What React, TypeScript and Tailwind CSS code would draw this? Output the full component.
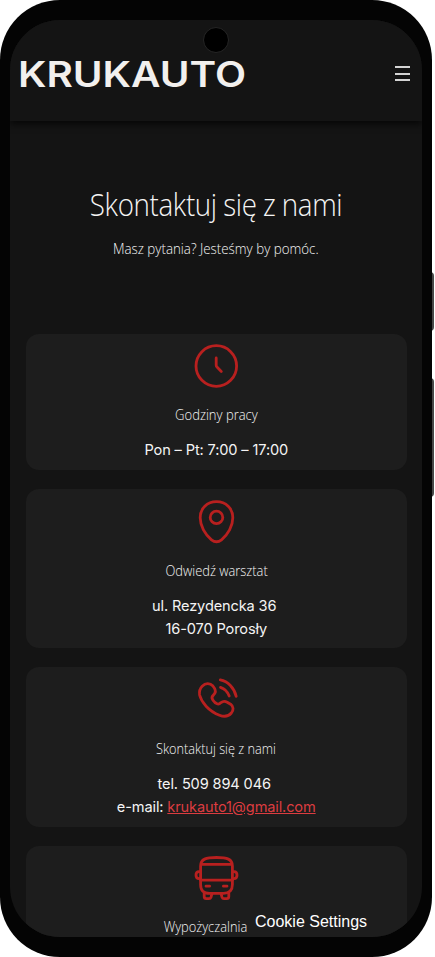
import React from 'react';
import clsx from 'clsx';

const Icon = ({ children }: { children: React.ReactNode }) => (
  <svg
    viewBox="0 0 45 45"
    className="block h-[45px] w-[45px] shrink-0 overflow-visible fill-none stroke-[#b8201f] stroke-[2.8]"
    strokeLinecap="round"
    strokeLinejoin="round"
  >
    {children}
  </svg>
);

const ClockIcon = () => (
  <Icon>
    <circle cx="22.3" cy="22" r="20.3" />
    <path d="M22.2 14v7.2c0 .8.2 1.3.8 1.9l4.3 4.3" />
  </Icon>
);

const PinIcon = () => (
  <Icon>
    <path d="M22.5 1.6C13 1.6 6.2 8.5 6.2 17.8C6.2 26 11 34.5 17.5 39.8C20.8 42.4 24.2 42.4 27.5 39.8C34 34.5 38.8 26 38.8 17.8C38.8 8.5 32 1.6 22.5 1.6Z" />
    <circle cx="22.5" cy="17.4" r="6.3" />
  </Icon>
);

const PhoneIcon = () => (
  <Icon>
    <path d="M8.2 8.2C11.5 4.8 16 4.8 18.7 7.8L20.3 10C22 12.6 21.7 14.6 19.8 16.6C17.6 18.4 17.4 20 18.8 22C20 23.8 21.4 25.2 23 25.8C24.6 26.6 25.8 25.8 27 24.6C29 23 31 23 33.2 24.2L36.6 26.2C39.6 28.4 39.8 32 37.4 35C34.5 38.4 30.5 39.2 25.5 37.2C15 33.2 7.5 24.5 5.6 17C5 13.5 5.6 10.8 8.2 8.2Z" />
    <path d="M26.3 1.9C34 3.4 40.2 10 42.2 18.4M26.5 9.4C30.7 10.8 33.6 13.8 35.2 18" />
  </Icon>
);

const BusIcon = () => (
  <Icon>
    <path d="M6.6 10C6.6 3 12 1.5 22.5 1.5S38.4 3 38.4 10V28.5C38.4 34.5 35.5 37.3 29.5 37.3H15.5C9.5 37.3 6.6 34.5 6.6 28.5Z" />
    <path d="M7.3 8.4H37.7M6.6 24.2H38.4M12 30.2H15.6M29.4 30.2H33" />
    <path d="M6.6 15.6H5C3 15.6 2 16.8 2 19S3 22.6 5 22.6H6.6M38.4 15.6H40C42 15.6 43 16.8 43 19S42 22.6 40 22.6H38.4" />
    <path d="M10.2 37V40.5C10.2 42 11 42.6 12.2 42.6H15C16 42.6 16.6 42.2 17 41.2L18 37.6M34.8 37V40.5C34.8 42 34 42.6 32.8 42.6H30C29 42.6 28.4 42.2 28 41.2L27 37.6" />
  </Icon>
);

type CardProps = {
  icon: React.ReactNode;
  title: string;
  titleClass?: string;
  className?: string;
  children?: React.ReactNode;
};

const Card = ({ icon, title, titleClass, className, children }: CardProps) => (
  <section
    className={clsx(
      'flex flex-col items-center rounded-[13px] bg-[#1d1d1d] pt-[10.5px] text-[#f4f4f4]',
      className
    )}
  >
    {icon}
    <h2
      className={clsx(
        'mt-[15px] whitespace-nowrap font-["Open_Sans",sans-serif] text-[14px] leading-[22px] font-[360]',
        titleClass
      )}
    >
      {title}
    </h2>
    <div className="mt-[13.4px] whitespace-nowrap text-center font-[Inter,sans-serif] text-[14.6px] leading-[22.8px] tracking-[-0.14px]">
      {children}
    </div>
  </section>
);

const Header = () => (
  <header className="relative z-10 flex h-[101px] shrink-0 justify-between bg-[#141414] pt-[31px] pr-[12px] pl-[9px] shadow-[0_3px_7px_rgba(0,0,0,0.7)]">
    <svg viewBox="0 0 230 48" className="h-12 w-[230px]">
      <text
        x="-1"
        y="36"
        textLength="228"
        lengthAdjust="spacingAndGlyphs"
        className="fill-[#f2f0ee] font-[Inter,sans-serif] text-[35px] font-semibold"
      >
        KRUKAUTO
      </text>
    </svg>
    <div className="mt-[15px] flex h-[15px] w-[15px] flex-col justify-between">
      <span className="h-[2px] bg-[#d4d4d4]" />
      <span className="h-[2px] bg-[#d4d4d4]" />
      <span className="h-[2px] bg-[#d4d4d4]" />
    </div>
    <span className="absolute top-[7px] left-[193px] h-[26px] w-[26px] rounded-full border border-[#262626] bg-black" />
  </header>
);

export default function App() {
  return (
    <div className="relative h-[957px] w-[435px] overflow-hidden bg-white">
      <span className="absolute top-[272px] left-[430px] h-[59px] w-[4px] rounded-r-sm bg-[#484848]" />
      <span className="absolute top-[378px] left-[430px] h-[119px] w-[4px] rounded-r-sm bg-[#484848]" />
      <div className="relative h-[957px] w-[432px] rounded-[60px] bg-[#040404] px-[10px] py-[20px]">
        <main className="relative flex h-[917px] flex-col overflow-hidden rounded-[50px] bg-[#141414]">
          <Header />
          <div className="flex h-[212.5px] shrink-0 flex-col items-center whitespace-nowrap pt-[61px] font-['Open_Sans',sans-serif] font-light text-[#f4f4f4]">
            <h1 className="scale-x-[0.895] text-[31px] leading-[44px] tracking-[-0.4px] [word-spacing:-0.5px]">
              Skontaktuj się z nami
            </h1>
            <p className="mt-[12px] scale-x-[0.92] text-[14.5px] leading-[22px] font-[360]">
              Masz pytania? Jesteśmy by pomóc.
            </p>
          </div>
          <div className="mr-[15.5px] ml-4 flex flex-col gap-[19px]">
            <Card
              icon={<ClockIcon />}
              title="Godziny pracy"
              titleClass="scale-x-[0.93]"
              className="h-[136.5px]"
            >
              Pon – Pt: 7:00 – 17:00
            </Card>
            <Card
              icon={<PinIcon />}
              title="Odwiedź warsztat"
              titleClass="scale-x-[0.92]"
              className="h-[159.3px]"
            >
              <p className="-translate-x-[2px]">ul. Rezydencka 36</p>
              <p>16-070 Porosły</p>
            </Card>
            <Card
              icon={<PhoneIcon />}
              title="Skontaktuj się z nami"
              titleClass="scale-x-[0.91]"
              className="h-[159.3px]"
            >
              <p className="-translate-x-[2px]">tel. 509 894 046</p>
              <p>
                e-mail:{' '}
                <a href="mailto:krukauto1@gmail.com" className="text-[#dc3c40] underline">
                  krukauto1@gmail.com
                </a>
              </p>
            </Card>
            <Card
              icon={<BusIcon />}
              title="Wypożyczalnia"
              titleClass="scale-x-[0.92] -translate-x-[11px]"
              className="h-[160px]"
            />
          </div>
          <button className="absolute top-[888px] left-[238px] h-[28px] bg-[#1d1d1d] px-[7px] font-['Liberation_Sans',sans-serif] text-[16px] whitespace-nowrap text-white">
            Cookie Settings
          </button>
        </main>
      </div>
    </div>
  );
}
